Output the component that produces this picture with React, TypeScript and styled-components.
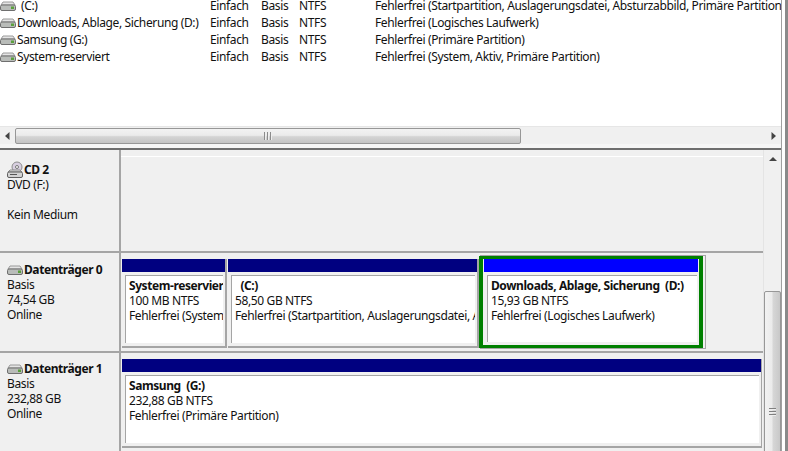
import { createGlobalStyle, styled } from 'styled-components';

const GlobalStyle = createGlobalStyle`
  html, body {
    margin: 0;
    padding: 0;
    background: #fff;
  }
  body {
    font-family: "Noto Sans", "Liberation Sans", sans-serif;
    font-size: 12px;
    letter-spacing: -0.37px;
    color: #111;
  }
`;

const Window = styled.div`
  width: 788px;
  height: 451px;
  display: flex;
  overflow: hidden;
  background: #fff;
`;
const Content = styled.div`
  width: 781px;
  display: flex;
  flex-direction: column;
  border-right: 1px solid #a0a0a0;
`;
const WindowEdge = styled.div`
  width: 3px;
  margin-left: 3px;
  background: #8a8a8a;
`;

const ListPane = styled.div`
  height: 126px;
  overflow: hidden;
  background: #fff;
`;
const VolumeList = styled.div`
  margin-top: -3px;
`;
const VolumeRow = styled.div`
  height: 17px;
  display: grid;
  grid-template-columns: 210px 51px 38px 76px 1fr;
  align-items: center;
  white-space: nowrap;
`;
const VolumeName = styled.div<{ $indent?: boolean }>`
  display: flex;
  align-items: center;
  gap: ${(p) => (p.$indent ? '5px' : '1px')};
`;

const HScroll = styled.div`
  height: 18px;
  display: flex;
  align-items: center;
  background: #f0f0f0;
  border-top: 1px solid #e6e6e6;
  box-sizing: border-box;
`;
const ArrowButton = styled.div`
  width: 15px;
  flex: none;
  display: flex;
  justify-content: center;
`;
const HThumb = styled.div`
  flex: 1;
  height: 16px;
  box-sizing: border-box;
  border: 1px solid #979797;
  border-radius: 2px;
  display: flex;
  align-items: center;
  justify-content: center;
  gap: 1px;
  background: linear-gradient(#f2f2f2 0%, #ebebeb 45%, #d4d4d4 55%, #c4c4c4 100%);
`;
const HTrackEnd = styled.div`
  width: 245px;
  flex: none;
  height: 16px;
`;
const GripH = styled.span`
  width: 1px;
  height: 8px;
  background: #8c8c8c;
  border-right: 1px solid #eee;
`;
const SplitGap = styled.div`
  height: 4px;
  background: #f6f6f6;
`;
const Splitter = styled.div`
  height: 2px;
  background: #6e6e6e;
`;

const LowerPane = styled.div`
  flex: 1;
  display: flex;
  min-height: 0;
  background: #f0f0f0;
`;
const DiskArea = styled.div`
  flex: 1;
  min-width: 0;
`;
const DiskRow = styled.div<{ $height: number }>`
  height: ${(p) => p.$height}px;
  display: flex;
  box-sizing: border-box;
  border-bottom: 2px solid #a5a5a5;
`;
const DiskInfo = styled.div<{ $top: number }>`
  width: 121px;
  flex: none;
  box-sizing: border-box;
  padding: ${(p) => p.$top}px 0 0 7px;
  border-right: 2px solid #a5a5a5;
  line-height: 15px;
`;
const DiskTitle = styled.div`
  display: flex;
  align-items: center;
  gap: 1px;
  font-weight: 700;
  height: 15px;
  letter-spacing: -0.42px;
`;
const DiskLine = styled.div<{ $gap?: boolean }>`
  height: 15px;
  margin-top: ${(p) => (p.$gap ? '15px' : '0')};
`;
const EmptyTrack = styled.div`
  flex: 1;
  margin-top: 6px;
  border-top: 1px solid #fff;
`;
const Partitions = styled.div<{ $top: number }>`
  flex: 1;
  display: flex;
  padding: ${(p) => p.$top}px 0 0 1px;
`;
const Partition = styled.div<{ $width: number; $last?: boolean }>`
  width: ${(p) => p.$width}px;
  flex: none;
  box-sizing: border-box;
  height: 89px;
  border-bottom: 2px solid #a5a5a5;
  border-right: ${(p) => (p.$last ? '1px solid #a5a5a5' : '0')};
`;
const SelectedPartition = styled.div<{ $width: number }>`
  width: ${(p) => p.$width}px;
  flex: none;
  box-sizing: border-box;
  height: 92px;
  margin: -3px 0 0 -1px;
  border: solid #008000;
  border-width: 3px 4px 3px 4px;
  box-shadow: 2px 0 0 #f0f0f0, 2px 0 0 1px #a5a5a5;
  background: #f0f0f0;
`;
const PartitionBar = styled.div<{ $selected?: boolean }>`
  height: 13px;
  margin-left: ${(p) => (p.$selected ? '1px' : '0')};
  margin-right: ${(p) => (p.$selected ? '1px' : '0')};
  background: ${(p) => (p.$selected ? '#0000ff' : '#000080')};
`;
const PartitionBody = styled.div<{ $selected?: boolean }>`
  margin: 3px 2px 0 ${(p) => (p.$selected ? '4px' : '3px')};
  height: ${(p) => (p.$selected ? '67px' : '68px')};
  box-sizing: border-box;
  background: #fff;
  border-top: 1px solid #a5a5a5;
  border-left: 1px solid #a5a5a5;
  padding: 2px 0 0 3px;
  line-height: 15px;
  overflow: hidden;
  white-space: nowrap;
`;
const PartitionTitle = styled.div`
  font-weight: 700;
  letter-spacing: -0.42px;
`;
const PartitionGap = styled.div`
  width: 2px;
  flex: none;
  margin-right: 1px;
  height: 89px;
  background: #a5a5a5;
`;

const VScroll = styled.div`
  width: 17px;
  flex: none;
  position: relative;
  display: flex;
  flex-direction: column;
  align-items: center;
  background: #f0f0f0;
  border-left: 1px solid #e4e4e4;
`;
const UpArrow = styled.div`
  margin-top: 7px;
  width: 0;
  height: 0;
  border-left: 4px solid transparent;
  border-right: 4px solid transparent;
  border-bottom: 4px solid #444;
`;
const VThumb = styled.div`
  position: absolute;
  left: 0;
  right: 0;
  top: 141px;
  bottom: -2px;
  box-sizing: border-box;
  border: 1px solid #979797;
  border-radius: 2px;
  display: flex;
  flex-direction: column;
  align-items: center;
  padding-top: 116px;
  gap: 1px;
  background: linear-gradient(90deg, #f2f2f2 0%, #ebebeb 45%, #d6d6d6 55%, #c8c8c8 100%);
`;
const GripV = styled.span`
  width: 7px;
  height: 1px;
  background: #808080;
  border-bottom: 1px solid #eee;
`;

function DriveIcon() {
  return (
    <svg width="16" height="12" viewBox="0 0 16 12">
      <path d="M1 5 L3 2 H13 L15 5 Z" fill="#e4e4e4" stroke="#9a9a9a" />
      <rect x="0.5" y="5" width="15" height="5.5" rx="1.5" fill="#b9bcb9" stroke="#6f6f6f" />
      <rect x="11" y="6.5" width="3" height="2.5" fill="#5aa03c" />
    </svg>
  );
}

function CdIcon() {
  return (
    <svg width="16" height="18" viewBox="0 0 16 18">
      <circle cx="10" cy="6" r="5" fill="#d8cfe0" stroke="#8d8d8d" />
      <circle cx="10" cy="6" r="1.5" fill="#fff" stroke="#777" />
      <path d="M1 11 L3 9 H13 L15 11 Z" fill="#e4e4e4" stroke="#8a8a8a" />
      <rect x="0.5" y="11" width="15" height="5.5" rx="1.5" fill="#d2d2d2" stroke="#5f5f5f" />
      <rect x="3" y="13" width="7" height="1" fill="#555" />
    </svg>
  );
}

const volumes = [
  { name: '(C:)', indent: true, status: 'Fehlerfrei (Startpartition, Auslagerungsdatei, Absturzabbild, Primäre Partition)' },
  { name: 'Downloads, Ablage, Sicherung (D:)', status: 'Fehlerfrei (Logisches Laufwerk)' },
  { name: 'Samsung (G:)', status: 'Fehlerfrei (Primäre Partition)' },
  { name: 'System-reserviert', status: 'Fehlerfrei (System, Aktiv, Primäre Partition)' },
];

export default function App() {
  return (
    <>
      <GlobalStyle />
      <Window>
        <Content>
          <ListPane>
            <VolumeList>
              {volumes.map((v) => (
                <VolumeRow key={v.name}>
                  <VolumeName $indent={v.indent}>
                    <DriveIcon />
                    {v.name}
                  </VolumeName>
                  <div>Einfach</div>
                  <div>Basis</div>
                  <div>NTFS</div>
                  <div>{v.status}</div>
                </VolumeRow>
              ))}
            </VolumeList>
          </ListPane>
          <HScroll>
            <ArrowButton>
              <svg width="5" height="8" viewBox="0 0 5 8">
                <path d="M4.5 0 V8 L0 4 Z" fill="#444" />
              </svg>
            </ArrowButton>
            <HThumb>
              <GripH />
              <GripH />
              <GripH />
            </HThumb>
            <HTrackEnd />
            <ArrowButton>
              <svg width="5" height="8" viewBox="0 0 5 8">
                <path d="M0.5 0 V8 L5 4 Z" fill="#444" />
              </svg>
            </ArrowButton>
          </HScroll>
          <SplitGap />
          <Splitter />
          <LowerPane>
            <DiskArea>
              <DiskRow $height={103}>
                <DiskInfo $top={12}>
                  <DiskTitle>
                    <CdIcon />
                    CD 2
                  </DiskTitle>
                  <DiskLine>DVD (F:)</DiskLine>
                  <DiskLine $gap>Kein Medium</DiskLine>
                </DiskInfo>
                <EmptyTrack />
              </DiskRow>
              <DiskRow $height={100}>
                <DiskInfo $top={9}>
                  <DiskTitle>
                    <DriveIcon />
                    Datenträger 0
                  </DiskTitle>
                  <DiskLine>Basis</DiskLine>
                  <DiskLine>74,54 GB</DiskLine>
                  <DiskLine>Online</DiskLine>
                </DiskInfo>
                <Partitions $top={6}>
                  <Partition $width={103}>
                    <PartitionBar />
                    <PartitionBody>
                      <PartitionTitle>System-reserviert</PartitionTitle>
                      <div>100 MB NTFS</div>
                      <div>Fehlerfrei (System, Aktiv, Primäre Partition)</div>
                    </PartitionBody>
                  </Partition>
                  <PartitionGap />
                  <Partition $width={249}>
                    <PartitionBar />
                    <PartitionBody>
                      <PartitionTitle>&nbsp;&nbsp;(C:)</PartitionTitle>
                      <div>58,50 GB NTFS</div>
                      <div>Fehlerfrei (Startpartition, Auslagerungsdatei, Absturzabbild</div>
                    </PartitionBody>
                  </Partition>
                  <PartitionGap />
                  <SelectedPartition $width={224}>
                    <PartitionBar $selected />
                    <PartitionBody $selected>
                      <PartitionTitle>Downloads, Ablage, Sicherung&nbsp; (D:)</PartitionTitle>
                      <div>15,93 GB NTFS</div>
                      <div>Fehlerfrei (Logisches Laufwerk)</div>
                    </PartitionBody>
                  </SelectedPartition>
                </Partitions>
              </DiskRow>
              <DiskRow $height={100}>
                <DiskInfo $top={8}>
                  <DiskTitle>
                    <DriveIcon />
                    Datenträger 1
                  </DiskTitle>
                  <DiskLine>Basis</DiskLine>
                  <DiskLine>232,88 GB</DiskLine>
                  <DiskLine>Online</DiskLine>
                </DiskInfo>
                <Partitions $top={6}>
                  <Partition $width={640} $last>
                    <PartitionBar />
                    <PartitionBody>
                      <PartitionTitle>Samsung&nbsp; (G:)</PartitionTitle>
                      <div>232,88 GB NTFS</div>
                      <div>Fehlerfrei (Primäre Partition)</div>
                    </PartitionBody>
                  </Partition>
                </Partitions>
              </DiskRow>
            </DiskArea>
            <VScroll>
              <UpArrow />
              <VThumb>
                <GripV />
                <GripV />
                <GripV />
              </VThumb>
            </VScroll>
          </LowerPane>
        </Content>
        <WindowEdge />
      </Window>
    </>
  );
}
